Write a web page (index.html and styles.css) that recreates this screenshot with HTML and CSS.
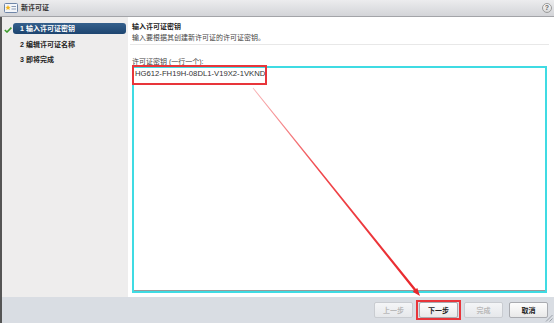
FILE: index.html
```html
<!DOCTYPE html>
<html lang="zh-CN">
<head>
  <meta charset="UTF-8">
  <title>新许可证</title>
  <link rel="stylesheet" href="styles.css">
</head>
<body>
  <div class="window">
    <div class="titlebar">
      <svg class="title-icon" width="14" height="10" viewBox="0 0 14 10">
        <rect x="0.5" y="0.5" width="13" height="9" rx="1" fill="#f4f6fa" stroke="#6f86a8"/>
        <polygon points="4,2 4.8,3.8 6.7,3.9 5.2,5.1 5.7,7 4,5.9 2.3,7 2.8,5.1 1.3,3.9 3.2,3.8" fill="#f2b51c"/>
        <line x1="7.5" y1="3.5" x2="12" y2="3.5" stroke="#8a9ab3"/>
        <line x1="7.5" y1="6" x2="12" y2="6" stroke="#8a9ab3"/>
      </svg>
      <span class="title">新许可证</span>
      <span class="help">?</span>
    </div>

    <div class="main">
      <!-- Wizard steps -->
      <div class="steps">
        <div class="step">
          <span class="check">
            <svg width="8" height="6" viewBox="0 0 8 6">
              <polyline points="0.8,3 3,5 7.4,0.6" fill="none" stroke="#3c9b2c" stroke-width="1.6"/>
            </svg>
          </span>
          <div class="step-label active"><span class="num">1</span>输入许可证密钥</div>
        </div>
        <div class="step">
          <span class="check"></span>
          <div class="step-label"><span class="num">2</span>编辑许可证名称</div>
        </div>
        <div class="step">
          <span class="check"></span>
          <div class="step-label"><span class="num">3</span>即将完成</div>
        </div>
      </div>

      <!-- Step content -->
      <div class="content">
        <div class="heading">输入许可证密钥</div>
        <div class="desc">输入要根据其创建新许可证的许可证密钥。</div>
        <div class="divider"></div>
        <label class="field-label" for="keys">许可证密钥 (一行一个):</label>
        <div class="key-box">
          <div class="key-text" id="keys">HG612-FH19H-08DL1-V19X2-1VKND<span class="caret"></span></div>
          <div class="mark mark-key"></div>
        </div>
      </div>
    </div>

    <div class="footer">
      <button class="btn" disabled>上一步</button>
      <button class="btn btn-marked">下一步</button>
      <button class="btn" disabled>完成</button>
      <button class="btn">取消</button>
      <svg class="grip" width="8" height="8" viewBox="0 0 8 8">
        <line x1="7.5" y1="1" x2="1" y2="7.5" stroke="#9aa0a8"/>
        <line x1="7.5" y1="4.5" x2="4.5" y2="7.5" stroke="#9aa0a8"/>
      </svg>
    </div>

    <!-- annotation arrow -->
    <svg class="arrow" width="554" height="323" viewBox="0 0 554 323">
      <defs>
        <linearGradient id="fade" x1="253" y1="88" x2="420" y2="296" gradientUnits="userSpaceOnUse">
          <stop offset="0" stop-color="#f05a5e" stop-opacity="0.45"/>
          <stop offset="0.4" stop-color="#ee3338" stop-opacity="0.9"/>
          <stop offset="1" stop-color="#e8262b"/>
        </linearGradient>
      </defs>
      <polygon fill="url(#fade)" points="252.7,88.25 414.06,290.55 412.66,291.68 420,296 417.34,287.93 415.94,289.05 253.31,87.75"/>
    </svg>
  </div>
</body>
</html>
```

FILE: styles.css
```css
/* General Styles */
* {
  margin: 0;
  padding: 0;
  box-sizing: border-box;
}

body {
  font-family: 'Liberation Sans', 'Noto Sans CJK SC', sans-serif;
  font-size: 7px;
  color: #222;
  background: #fff;
}

.window {
  position: relative;
  width: 554px;
  height: 323px;
  display: flex;
  flex-direction: column;
  overflow: hidden;
}

/* Title bar */
.titlebar {
  height: 17px;
  display: flex;
  align-items: center;
  padding: 0 2px 0 4px;
  background: linear-gradient(#ececee, #d3d4d8);
  border-bottom: 1px solid #a3a4a8;
}

.title-icon {
  margin-right: 3px;
}

.title {
  font-weight: bold;
  color: #333;
  line-height: 16px;
}

.help {
  margin-left: auto;
  width: 10px;
  height: 10px;
  border-radius: 50%;
  border: 1px solid #9c9c9c;
  background: linear-gradient(#fafafa, #d8d8d8);
  color: #666;
  font-weight: bold;
  font-size: 7px;
  line-height: 8px;
  text-align: center;
}

/* Main area */
.main {
  flex: 1;
  display: flex;
  border-left: 2px solid #555;
}

.steps {
  width: 126px;
  background: #eeeded;
  padding-top: 6px;
  display: flex;
  flex-direction: column;
  gap: 4.5px;
}

.step {
  display: flex;
  align-items: center;
  height: 11px;
}

.check {
  width: 11px;
  height: 11px;
  display: flex;
  align-items: center;
  padding-left: 2px;
  padding-top: 2px;
}

.step-label {
  flex: 1;
  height: 11px;
  line-height: 11px;
  font-weight: bold;
  color: #222;
  padding-left: 7px;
  margin-right: 2px;
  border-radius: 3px;
  white-space: nowrap;
}

.step-label.active {
  background: linear-gradient(#35608c, #1d4570);
  color: #fff;
}

.num {
  display: inline-block;
  width: 6px;
}

.content {
  flex: 1;
  display: flex;
  flex-direction: column;
  padding: 4px 7px 4px 4px;
}

.heading {
  font-weight: bold;
  line-height: 11px;
  color: #222;
}

.desc {
  line-height: 11px;
  color: #444;
}

.divider {
  height: 1px;
  background: #e8e8e8;
  margin: 1px -2px 0 -2px;
}

.field-label {
  display: block;
  margin-top: 13px;
  line-height: 8px;
  color: #444;
}

.key-box {
  position: relative;
  flex: 1;
  border: 2px solid #3fdbe3;
  box-shadow: inset 0 -1px 0 #9a9a9a;
  background: #fff;
}

.key-text {
  font-size: 7.7px;
  line-height: 11px;
  padding-left: 1px;
  color: #333;
}

.caret {
  display: inline-block;
  width: 1px;
  height: 9px;
  margin-left: 1px;
  vertical-align: -2px;
  background: #333;
}

/* red annotation boxes */
.mark {
  position: absolute;
  border: 2px solid #e8353a;
}

.mark-key {
  left: -2px;
  top: -3px;
  width: 135px;
  height: 20px;
}

/* Footer */
.footer {
  height: 26px;
  display: flex;
  align-items: center;
  justify-content: flex-end;
  gap: 6px;
  padding-right: 6px;
  background: #d9dde3;
  border-left: 2px solid #555;
  position: relative;
}

.btn {
  position: relative;
  width: 39px;
  height: 16px;
  font-family: inherit;
  font-size: 7px;
  font-weight: bold;
  color: #222;
  background: linear-gradient(#fdfdfd, #e9e9e9);
  border: 1px solid #a9abb0;
  border-radius: 2px;
}

.btn:disabled {
  color: #b9b9b9;
  border-color: #c9ccd1;
  background: linear-gradient(#f4f5f7, #e6e8eb);
}

.btn-marked::after {
  content: '';
  position: absolute;
  left: -4px;
  right: -4px;
  top: -3px;
  bottom: -3px;
  border: 2px solid #e8353a;
}

.grip {
  position: absolute;
  right: 1px;
  bottom: 1px;
}

.arrow {
  position: absolute;
  left: 0;
  top: 0;
  pointer-events: none;
}
```
